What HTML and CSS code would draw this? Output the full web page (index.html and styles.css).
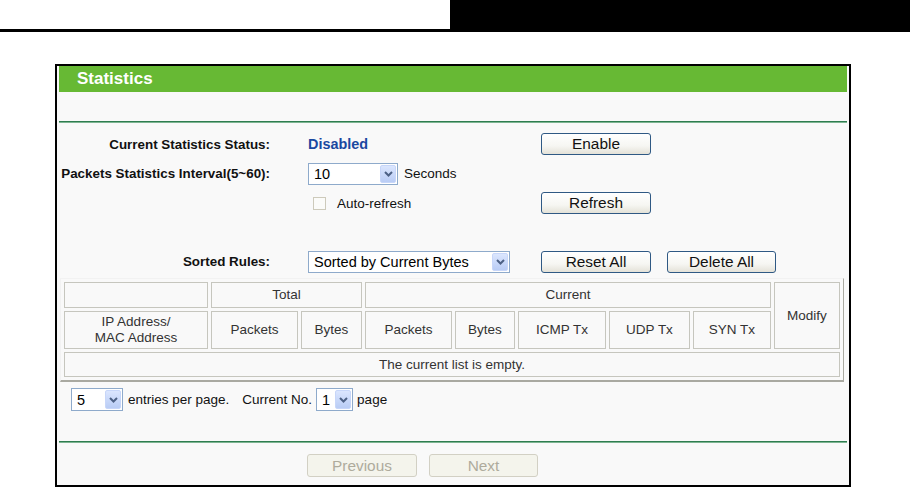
FILE: index.html
```html
<!DOCTYPE html>
<html>
<head>
<meta charset="utf-8">
<title>Statistics</title>
<link rel="stylesheet" href="styles.css">
</head>
<body>
<div class="top"><div class="top-left"></div><div class="top-right"></div></div>
<div class="frame">
  <div class="title">Statistics</div>
  <div class="spacer"></div>
  <div class="hline"></div>
  <div class="form">
    <div class="lbl">Current Statistics Status:</div>
    <div class="val"><span class="status">Disabled</span></div>
    <div class="act"><button class="btn">Enable</button></div>

    <div class="lbl">Packets Statistics Interval(5~60):</div>
    <div class="val">
      <div class="sel sel-interval"><span class="sel-text">10</span><span class="sel-arrow"><svg width="9" height="6" viewBox="0 0 9 6"><polyline points="1,1 4.5,4.5 8,1" fill="none" stroke="#4d6185" stroke-width="2"/></svg></span></div>
      <span class="unit">Seconds</span>
    </div>
    <div class="act"></div>

    <div class="lbl"></div>
    <div class="val"><span class="chk"></span><span class="chk-label">Auto-refresh</span></div>
    <div class="act"><button class="btn">Refresh</button></div>

    <div class="blank"></div>

    <div class="lbl">Sorted Rules:</div>
    <div class="val">
      <div class="sel sel-sort"><span class="sel-text">Sorted by Current Bytes</span><span class="sel-arrow"><svg width="9" height="6" viewBox="0 0 9 6"><polyline points="1,1 4.5,4.5 8,1" fill="none" stroke="#4d6185" stroke-width="2"/></svg></span></div>
    </div>
    <div class="act"><button class="btn">Reset All</button><button class="btn btn-gap">Delete All</button></div>
  </div>

  <div class="stats">
    <div class="cell c-empty"></div>
    <div class="cell c-total">Total</div>
    <div class="cell c-current">Current</div>
    <div class="cell c-modify">Modify</div>
    <div class="cell c-ip">IP Address/<br>MAC Address</div>
    <div class="cell">Packets</div>
    <div class="cell">Bytes</div>
    <div class="cell">Packets</div>
    <div class="cell">Bytes</div>
    <div class="cell">ICMP Tx</div>
    <div class="cell">UDP Tx</div>
    <div class="cell">SYN Tx</div>
    <div class="cell c-list">The current list is empty.</div>
  </div>

  <div class="pager">
    <div class="sel sel-entries"><span class="sel-text">5</span><span class="sel-arrow"><svg width="9" height="6" viewBox="0 0 9 6"><polyline points="1,1 4.5,4.5 8,1" fill="none" stroke="#4d6185" stroke-width="2"/></svg></span></div>
    <span class="ptext p-entries">entries per page.</span>
    <span class="ptext p-current">Current No.</span>
    <div class="sel sel-page"><span class="sel-text">1</span><span class="sel-arrow"><svg width="9" height="6" viewBox="0 0 9 6"><polyline points="1,1 4.5,4.5 8,1" fill="none" stroke="#4d6185" stroke-width="2"/></svg></span></div>
    <span class="ptext p-page">page</span>
  </div>

  <div class="hline hline-bottom"></div>

  <div class="nav">
    <button class="btn btn-disabled">Previous</button>
    <button class="btn btn-disabled btn-next">Next</button>
  </div>
</div>
</body>
</html>
```
FILE: styles.css
```css
html, body {
  margin: 0;
  padding: 0;
  background: #ffffff;
  overflow: hidden;
  font-family: "Liberation Sans", Arial, sans-serif;
  color: #000;
}

.top {
  display: flex;
  height: 32px;
}
.top-left {
  width: 450px;
  box-sizing: border-box;
  border-bottom: 3px solid #000;
}
.top-right {
  flex: 1;
  background: #000;
}

.frame {
  margin: 32px 0 0 55px;
  width: 796px;
  box-sizing: border-box;
  border: 2px solid #000;
  background: #f9f9f9;
  padding-bottom: 8px;
}

.title {
  margin: 0 2px;
  height: 26px;
  line-height: 26px;
  background: #67b934;
  color: #fff;
  font-weight: bold;
  font-size: 17px;
  padding-left: 18px;
}

.spacer {
  height: 29px;
}

.hline {
  margin: 0 2px;
  height: 0;
  border-top: 1px solid #2f7d50;
  border-bottom: 1px solid #7db592;
}
.hline-bottom {
  margin-top: 30px;
}

.form {
  margin-top: 6px;
  display: grid;
  grid-template-columns: 251px 233px 1fr;
  grid-template-rows: 30px 29px 30px 29px 29px;
  align-items: center;
}
.lbl {
  padding-right: 38px;
  text-align: right;
  font-weight: bold;
  font-size: 13.4px;
  color: #111;
  white-space: nowrap;
}
.val {
  display: flex;
  align-items: center;
  font-size: 13.5px;
}
.act {
  display: flex;
  align-items: center;
}
.blank {
  grid-column: 1 / -1;
  height: 29px;
}
.status {
  color: #1a48a0;
  font-weight: bold;
  font-size: 14.4px;
}
.unit {
  margin-left: 6px;
  color: #111;
}
.chk {
  width: 13px;
  height: 13px;
  box-sizing: border-box;
  margin-left: 5px;
  border: 1px solid #cdcabb;
  background: #fbfbf9;
}
.chk-label {
  margin-left: 11px;
  color: #111;
}

.sel {
  display: flex;
  align-items: stretch;
  box-sizing: border-box;
  border: 1px solid #8eaacb;
  background: #fff;
  padding: 1px;
}
.sel-text {
  flex: 1;
  display: flex;
  align-items: center;
  padding-left: 4px;
  font-size: 14.5px;
  color: #000;
  white-space: nowrap;
  overflow: hidden;
}
.sel-arrow {
  width: 16px;
  display: flex;
  align-items: center;
  justify-content: center;
  box-sizing: border-box;
  border: 1px solid #c7d6f9;
  border-radius: 2px;
  background: linear-gradient(#dbe6fe, #b9ccf5);
}
.sel-interval {
  width: 90px;
  height: 22px;
}
.sel-sort {
  width: 202px;
  height: 22px;
}
.sel-entries {
  width: 52px;
  height: 23px;
}
.sel-page {
  width: 37px;
  height: 23px;
}

.btn {
  width: 110px;
  height: 22px;
  box-sizing: border-box;
  margin: 0;
  padding: 0;
  border: 1px solid #2f5984;
  border-radius: 3px;
  background: linear-gradient(#ffffff 0%, #f6f6f2 60%, #e4e2d8 100%);
  font-family: "Liberation Sans", Arial, sans-serif;
  font-size: 15.4px;
  color: #111;
}
.btn-gap {
  margin-left: 16px;
  width: 109px;
}
.btn-disabled {
  height: 23px;
  border-color: #d2d0c4;
  background: #f4f4ec;
  color: #aeab9c;
}
.btn-next {
  margin-left: 12px;
  width: 109px;
}

.stats {
  margin: 2px 5px 0 3px;
  box-sizing: border-box;
  width: 784px;
  border: 1px solid;
  border-color: #f2f2f2 #a9a9a1 #a9a9a1 #f2f2f2;
  border-bottom-width: 2px;
  padding: 3px;
  display: grid;
  grid-template-columns: 144px 87px 61px 87px 60px 88px 81px 78px 66px;
  grid-template-rows: 26px 38px 25px;
  gap: 3px;
}
.cell {
  box-sizing: border-box;
  border: 1px solid #c6c6be;
  display: flex;
  align-items: center;
  justify-content: center;
  text-align: center;
  font-size: 13.5px;
  line-height: 16px;
  color: #333;
}
.c-empty {
  grid-column: 1;
  grid-row: 1;
}
.c-total {
  grid-column: 2 / 4;
  grid-row: 1;
}
.c-current {
  grid-column: 4 / 9;
  grid-row: 1;
}
.c-modify {
  grid-column: 9;
  grid-row: 1 / 3;
}
.c-ip {
  grid-column: 1;
  grid-row: 2;
}
.c-list {
  grid-column: 1 / -1;
  grid-row: 3;
}

.pager {
  margin-top: 6px;
  padding-left: 14px;
  height: 23px;
  display: flex;
  align-items: center;
}
.ptext {
  font-size: 13.5px;
  color: #111;
}
.p-entries {
  margin-left: 5px;
}
.p-current {
  margin-left: 13px;
}
.sel-page {
  margin-left: 4px;
}
.p-page {
  margin-left: 4px;
}

.nav {
  margin-top: 11px;
  padding-left: 250px;
  display: flex;
}
```
